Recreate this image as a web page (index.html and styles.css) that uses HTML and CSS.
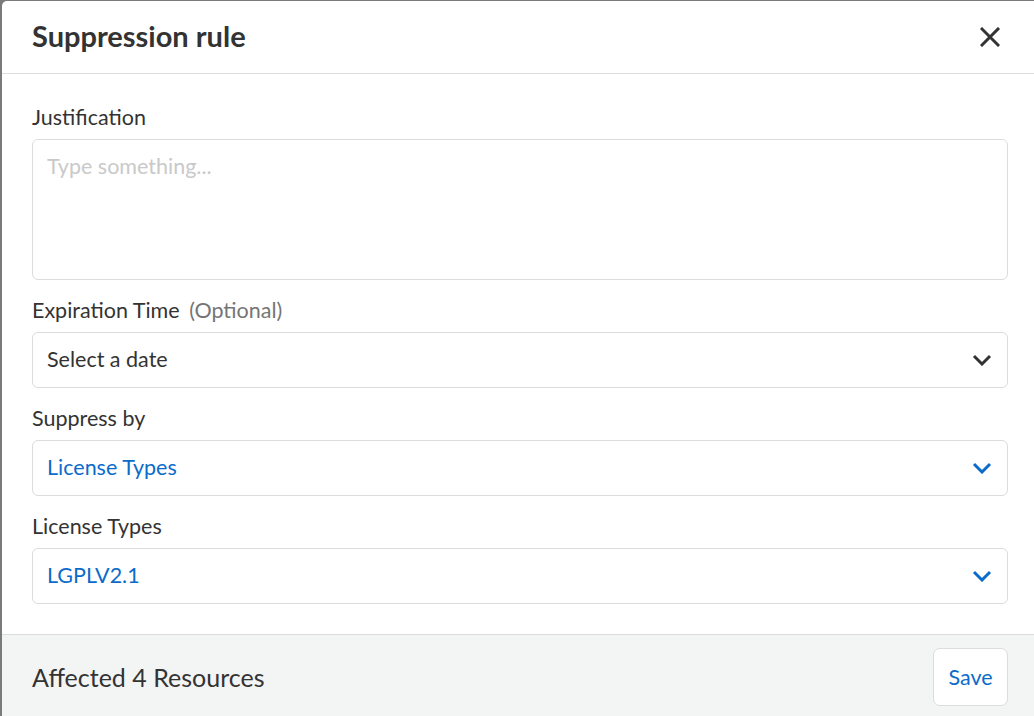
FILE: index.html
```html
<!DOCTYPE html>
<html lang="en">
<head>
<meta charset="utf-8">
<title>Suppression rule</title>
<link rel="stylesheet" href="styles.css">
</head>
<body>
<div class="modal">
  <header class="modal-header">
    <h1 class="modal-title">Suppression rule</h1>
    <button class="close-btn" aria-label="Close">
      <svg width="20" height="20" viewBox="0 0 20 20"><path d="M2 2 L18 18 M18 2 L2 18" stroke="#333" stroke-width="3" stroke-linecap="square" fill="none"/></svg>
    </button>
  </header>
  <div class="modal-body">
    <div class="field">
      <label class="field-label">Justification</label>
      <div class="textarea"><span class="placeholder">Type something...</span></div>
    </div>
    <div class="field">
      <label class="field-label">Expiration Time <span class="optional">(Optional)</span></label>
      <div class="select">
        <span class="select-value">Select a date</span>
        <svg class="chev" width="20" height="12" viewBox="0 0 20 12"><path d="M2 2 L10 10 L18 2" stroke="#333" stroke-width="3" fill="none"/></svg>
      </div>
    </div>
    <div class="field">
      <label class="field-label">Suppress by</label>
      <div class="select">
        <span class="select-value blue">License Types</span>
        <svg class="chev" width="20" height="12" viewBox="0 0 20 12"><path d="M2 2 L10 10 L18 2" stroke="#0b6bcb" stroke-width="3" fill="none"/></svg>
      </div>
    </div>
    <div class="field">
      <label class="field-label">License Types</label>
      <div class="select">
        <span class="select-value blue">LGPLV2.1</span>
        <svg class="chev" width="20" height="12" viewBox="0 0 20 12"><path d="M2 2 L10 10 L18 2" stroke="#0b6bcb" stroke-width="3" fill="none"/></svg>
      </div>
    </div>
  </div>
  <footer class="modal-footer">
    <span class="affected">Affected 4 Resources</span>
    <button class="save-btn">Save</button>
  </footer>
</div>
</body>
</html>
```
FILE: styles.css
```css
html, body {
  margin: 0;
  padding: 0;
  height: 100%;
  overflow: hidden;
}
body {
  background: #7a7a7a;
  font-family: Lato, "Open Sans", sans-serif;
  color: #333;
  padding: 1px 0 0 2px;
  box-sizing: border-box;
}
.modal {
  width: 1038px;
  background: #fff;
  border-top-left-radius: 5px;
  overflow: hidden;
}
.modal-header {
  height: 72px;
  box-sizing: border-box;
  display: flex;
  align-items: center;
  justify-content: space-between;
  padding: 0 32px 3px 30px;
  border-bottom: 1px solid #dedede;
  height: 73px;
}
.modal-title {
  margin: 0;
  font-size: 29px;
  font-weight: 700;
  color: #333;
}
.close-btn {
  background: none;
  border: 0;
  padding: 0;
  width: 20px;
  height: 20px;
  margin-right: 8px;
  margin-top: 2px;
  display: flex;
  cursor: pointer;
}
.modal-body {
  padding: 31px 32px 30px 30px;
  display: flex;
  flex-direction: column;
  gap: 18px;
}
.field {
  display: flex;
  flex-direction: column;
  gap: 10px;
}
.field-label {
  font-size: 21.5px;
  line-height: 24px;
  color: #333;
}
.optional {
  color: #757575;
  margin-left: 4px;
}
.textarea {
  border: 1px solid #dcdcdc;
  border-radius: 6px;
  padding: 14px 14px;
  box-sizing: border-box;
  height: 141px;
}
.placeholder {
  font-size: 21.5px;
  color: #c9c9c9;
  line-height: 24px;
}
.select {
  height: 56px;
  box-sizing: border-box;
  border: 1px solid #dcdcdc;
  border-radius: 6px;
  display: flex;
  align-items: center;
  justify-content: space-between;
  padding: 0 15px 2px 14px;
}
.select-value {
  font-size: 21.5px;
  color: #333;
}
.select-value.blue {
  color: #0b6bcb;
}
.chev {
  display: block;
  margin-top: 2px;
}
.modal-footer {
  background: #f3f4f4;
  border-top: 1px solid #dcdcdc;
  padding: 13px 32px 14px 30px;
  display: flex;
  align-items: center;
  justify-content: space-between;
}
.affected {
  font-size: 25px;
  color: #333;
}
.save-btn {
  height: 58px;
  width: 75px;
  background: #fff;
  border: 1px solid #dcdcdc;
  border-radius: 7px;
  font-family: Lato, "Open Sans", sans-serif;
  font-size: 21.5px;
  color: #0b6bcb;
  cursor: pointer;
}
```
